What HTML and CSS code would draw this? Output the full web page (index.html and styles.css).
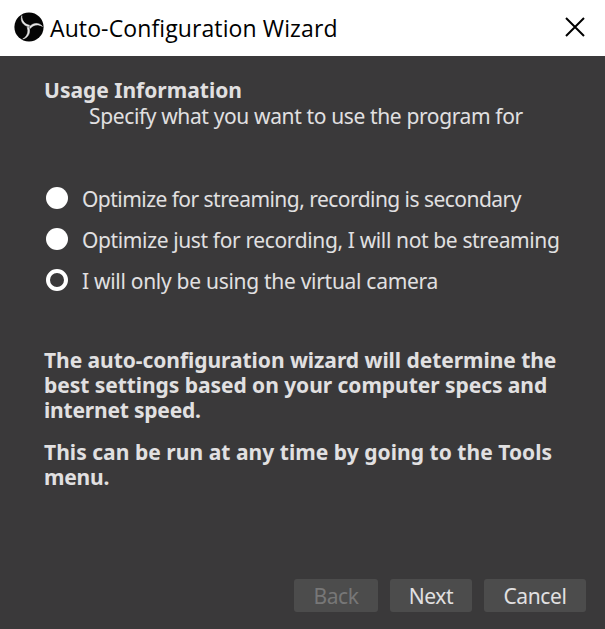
FILE: index.html
```html
<!DOCTYPE html>
<html lang="en">
<head>
<meta charset="utf-8">
<title>Auto-Configuration Wizard</title>
<link rel="stylesheet" href="styles.css">
</head>
<body>
<div class="window">
  <header class="titlebar">
    <svg class="logo" viewBox="0 0 30 30" aria-hidden="true">
      <circle cx="15" cy="15" r="14.6" fill="#050505"/>
      <g fill="#e8e8e8" stroke="#e8e8e8" stroke-width=".5">
        <path id="blade" d="M7.800 3.600C5.800 9 9.300 13.600 14.600 14.800L15.600 13.200C11 12.600 7.800 9 7.800 3.600Z"/>
        <use href="#blade" transform="rotate(120 15 15)"/>
        <use href="#blade" transform="rotate(240 15 15)"/>
      </g>
    </svg>
    <h1 class="title">Auto-Configuration Wizard</h1>
    <svg class="close" viewBox="0 0 20 20" aria-label="Close"><path d="M1 1L19 19M19 1L1 19"/></svg>
  </header>
  <main class="page">
    <h2 class="heading">Usage Information</h2>
    <p class="subtitle">Specify what you want to use the program for</p>
    <div class="options">
      <label class="option"><span class="radio"></span><span class="label streaming">Optimize for streaming, recording is secondary</span></label>
      <label class="option"><span class="radio"></span><span class="label recording">Optimize just for recording, I will not be streaming</span></label>
      <label class="option"><span class="radio checked"></span><span class="label camera">I will only be using the virtual camera</span></label>
    </div>
    <div class="info">
      <p>The auto-configuration wizard will determine the<br>best settings based on your computer specs and<br><span class="tight">internet speed.</span></p>
      <p class="rerun">This can be run at any time by going to the Tools<br><span class="tight">menu.</span></p>
    </div>
    <footer class="actions">
      <button class="btn back" disabled>Back</button>
      <button class="btn next">Next</button>
      <button class="btn cancel">Cancel</button>
    </footer>
  </main>
</div>
</body>
</html>
```
FILE: styles.css
```css
* { box-sizing: border-box; }
body, h1, h2, p { margin: 0; }
body { background: #3a393a; }
.window { display: flex; flex-direction: column; height: 629px; font-family: "Noto Sans", sans-serif; font-size: 21px; color: #e1e0e1; white-space: nowrap; }
.titlebar { display: flex; align-items: center; height: 56px; padding: 0 20px 0 14px; background: #fff; color: #000; }
.logo { width: 30px; height: 30px; margin-top: -2px; }
.title { margin-left: 6px; font: 400 23px/30px "Open Sans", sans-serif; letter-spacing: 0.11px; }
.close { width: 20px; height: 20px; margin: -2px 0 0 auto; fill: none; stroke: #000; stroke-width: 2; }
.page { display: flex; flex-direction: column; flex: 1; padding: 21px 19px 17px 44px; }
.heading { font-size: 21px; line-height: 26px; font-weight: 700; }
.subtitle { margin-left: 45px; line-height: 26px; letter-spacing: -0.37px; }
.options { display: flex; flex-direction: column; margin-top: 50px; }
.option { display: flex; align-items: center; height: 41px; }
.radio { width: 22px; height: 22px; margin: -3px 14px 0 2px; border-radius: 50%; background: #fff; }
.checked { background: none; border: 4px solid #fff; }
.label { margin-top: -2px; }
.streaming { letter-spacing: -0.54px; }
.recording { letter-spacing: -0.37px; }
.camera { letter-spacing: -0.29px; }
.info { margin-top: 46px; font-weight: 700; line-height: 25px; letter-spacing: -0.05px; }
.info p + p { margin-top: 17px; }
.rerun { letter-spacing: 0.04px; }
.tight { letter-spacing: -0.2px; }
.actions { display: flex; justify-content: flex-end; gap: 12px; margin-top: auto; }
.btn { height: 33px; padding: 2px 0 0; border: 0; border-radius: 3px; background: #4c4c4c; color: inherit; font: inherit; line-height: 31px; letter-spacing: -0.4px; }
.back { width: 84px; color: #777; }
.next { width: 82px; }
.cancel { width: 102px; }
```
